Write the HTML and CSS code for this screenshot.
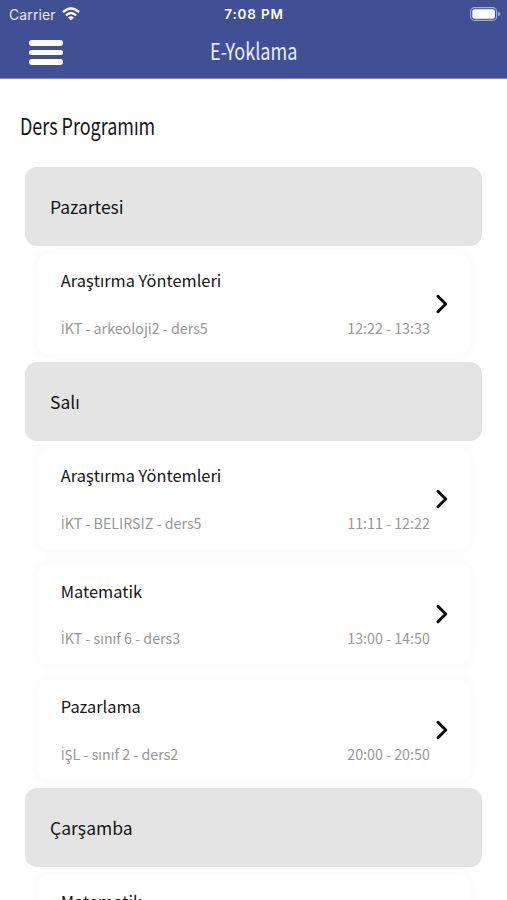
FILE: index.html
```html
<!DOCTYPE html>
<html lang="tr">
<head>
<meta charset="utf-8">
<meta name="viewport" content="width=device-width, initial-scale=1">
<title>E-Yoklama</title>
<link rel="stylesheet" href="styles.css">
</head>
<body>
<header class="top">
  <div class="status">
    <div class="carrier"><span>Carrier</span>
      <svg class="wifi" viewBox="0 0 18 14" width="18" height="14"><g fill="none" stroke="#fff" stroke-width="2.3"><path d="M1 5.2Q9-2.2 17 5.2"/><path d="M3.9 8.3Q9 3.7 14.1 8.3"/></g><path d="M6 10.5Q9 8 12 10.5L9 13.6Z" fill="#fff"/></svg>
    </div>
    <div class="clock">7:08 PM</div>
    <svg class="battery" viewBox="0 0 31 14" width="31" height="14"><rect x=".6" y=".6" width="26" height="12.8" rx="4" fill="none" stroke="#a5add3" stroke-width="1.1"/><rect x="2.3" y="2.3" width="22.6" height="9.4" rx="2.3" fill="#fff"/><path d="M28 4.8Q30.3 5.6 30.3 7T28 9.2Z" fill="#a5add3"/></svg>
  </div>
  <div class="nav">
    <button class="menu" aria-label="Menü"><i></i><i></i><i></i></button>
    <h1><span>E-Yoklama</span></h1>
  </div>
</header>
<main>
  <h2><span>Ders Programım</span></h2>
  <div class="list">
    <h3 class="day">Pazartesi</h3>
    <article class="card"><div class="body"><h4>Araştırma Yöntemleri</h4><p><span><span class="dotted">İ</span>KT - arkeoloji2 - ders5</span><time>12:22 - 13:33</time></p></div><svg class="chev" viewBox="0 0 12 20" width="12" height="20"><path d="M2 2.2L9.7 10L2 17.8"/></svg></article>
    <h3 class="day">Salı</h3>
    <article class="card"><div class="body"><h4>Araştırma Yöntemleri</h4><p><span><span class="dotted">İ</span>KT - BELIRSIZ - ders5</span><time>11:11 - 12:22</time></p></div><svg class="chev" viewBox="0 0 12 20" width="12" height="20"><path d="M2 2.2L9.7 10L2 17.8"/></svg></article>
    <article class="card"><div class="body"><h4>Matematik</h4><p><span><span class="dotted">İ</span>KT - sınıf 6 - ders3</span><time>13:00 - 14:50</time></p></div><svg class="chev" viewBox="0 0 12 20" width="12" height="20"><path d="M2 2.2L9.7 10L2 17.8"/></svg></article>
    <article class="card"><div class="body"><h4>Pazarlama</h4><p><span><span class="dotted">İ</span>ŞL - sınıf 2 - ders2</span><time>20:00 - 20:50</time></p></div><svg class="chev" viewBox="0 0 12 20" width="12" height="20"><path d="M2 2.2L9.7 10L2 17.8"/></svg></article>
    <h3 class="day">Çarşamba</h3>
    <article class="card"><div class="body"><h4>Matematik</h4></div></article>
  </div>
</main>
</body>
</html>
```
FILE: styles.css
```css
* { box-sizing: border-box; margin: 0; padding: 0; }
body {
  height: 900px;
  overflow: hidden;
  background: #fff;
  color: #151515;
  font-family: "Noto Sans CJK SC", "Noto Sans", sans-serif;
}
.top { height: 79px; background: #415095; color: #fff; border-bottom: 1px solid #7f8fc4; }
.status {
  height: 27px;
  display: grid;
  grid-template-columns: 1fr auto 1fr;
  align-items: center;
  padding: 0 6px 0 9px;
  font: 14px/27px Inter, sans-serif;
}
.carrier { display: flex; align-items: center; gap: 6px; color: #e6e9f7; letter-spacing: .1px; }
.clock { font-size: 13.5px; font-weight: 600; letter-spacing: .8px; margin-right: 2px; padding-top: 1px; }
.battery { justify-self: end; }
.nav { height: 51px; display: flex; align-items: center; padding-left: 29px; }
.menu { width: 34px; border: 0; background: none; display: flex; flex-direction: column; gap: 4px; }
.menu i { height: 5.8px; border-radius: 3px; background: #fff; }
h1, h2 { font-weight: 400; white-space: nowrap; }
h1 { margin: -6px 0 0 147px; font-size: 23px; line-height: 48px; color: #e9edfb; }
h1 span, h2 span { display: inline-block; transform: scaleX(.785); transform-origin: 0 50%; }
h2 { padding: 30px 0 0 20px; font-size: 23px; line-height: 32px; height: 88px; }
h2 span { transform: scaleX(.78); }
.list { display: flex; flex-direction: column; height: 733px; overflow: hidden; padding: 0 24.7px 0 25.3px; }
.day {
  flex: none;
  height: 79.2px;
  padding-left: 24.7px;
  border-radius: 12px;
  background: #e4e4e4;
  font-size: 17.5px;
  font-weight: 400;
  line-height: 79px;
  position: relative;
}
.card {
  flex: none;
  height: 100px;
  margin: 7.8px 12px 7.8px 12.5px;
  padding: 0 22px 0 23px;
  display: flex;
  align-items: center;
  justify-content: space-between;
  border-radius: 10px;
  background: #fff;
  box-shadow: 0 0 13px 3px rgba(0, 0, 0, .025);
}
.body { width: 369px; height: 100px; padding-top: 13.4px; }
h4 { font-size: 16.4px; font-weight: 400; line-height: 26px; height: 48.6px; }
.body p { display: flex; justify-content: space-between; font-size: 14.25px; line-height: 24px; height: 24px; color: #969696; }
.dotted { font-family: "Open Sans", sans-serif; }
.chev { fill: none; stroke: #080808; stroke-width: 2.9; stroke-linecap: round; stroke-linejoin: round; }
```
